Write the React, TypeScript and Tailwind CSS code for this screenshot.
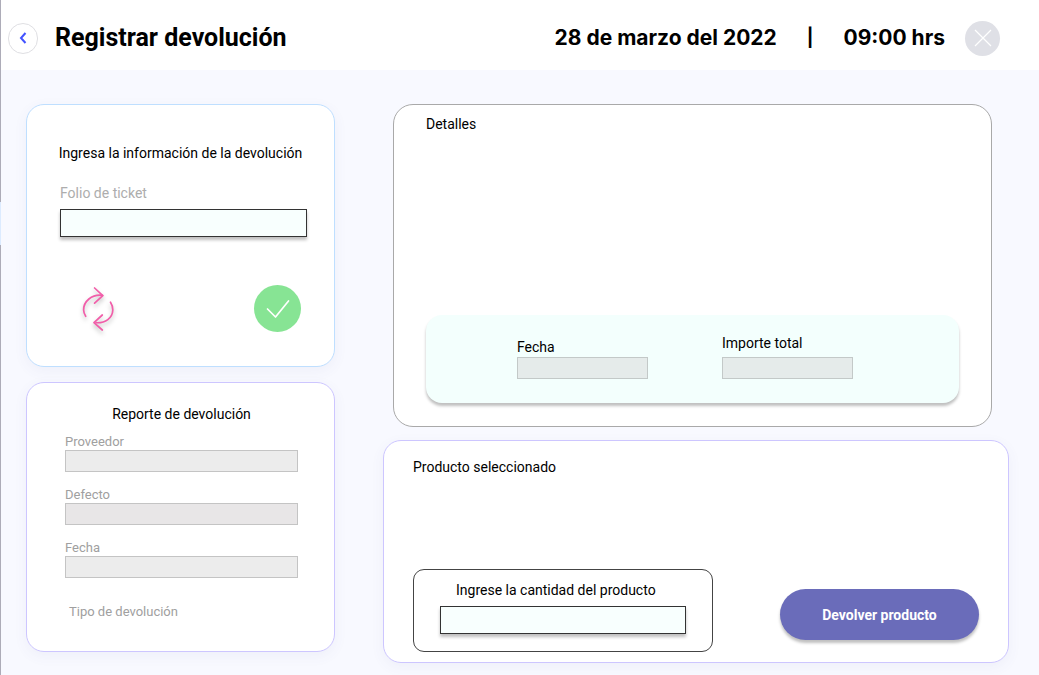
import type { ReactNode } from "react";

function Card({ label, className, children }: { label: string; className: string; children: ReactNode }) {
  return (
    <section aria-label={label} className={`flex flex-col border bg-white ${className}`}>
      {children}
    </section>
  );
}

function ReadOnlyField({ id, label, className }: { id: string; label: string; className: string }) {
  return (
    <div className="flex flex-col">
      <label htmlFor={id} className="text-[13px] leading-4 text-[#a0a0a0]">
        {label}
      </label>
      <input id={id} readOnly className={`h-[22px] w-full border border-[#c4c4c4] px-1 text-sm outline-none ${className}`} />
    </div>
  );
}

function RefreshIcon() {
  return (
    <svg
      width="36"
      height="46"
      viewBox="0 0 36 46"
      fill="none"
      stroke="#f15ea9"
      strokeWidth="1.7"
      strokeLinecap="round"
      strokeLinejoin="round"
      className="drop-shadow-[0_3px_2px_rgba(0,0,0,0.25)]"
      aria-hidden="true"
    >
      <path d="M13.600 2 L21.800 9.700 L13.600 17.200" />
      <path d="M21.500 9.300 C10.500 8 2.500 15.500 2.600 24 C2.700 26.500 3.500 28.500 4.700 30.300" />
      <path d="M29.500 16.200 C31 18.500 31.800 21 31.800 24 C31.500 32 24.500 37.300 15 36.700" />
      <path d="M21.300 29 L13 36.600 L21.300 44" />
    </svg>
  );
}

export default function App() {
  return (
    <div className="flex min-h-screen bg-[#f8f9ff] font-[Roboto,sans-serif] text-sm leading-5 text-black">
      <div className="flex w-px shrink-0 flex-col" aria-hidden="true">
        <div className="h-[202px] bg-[#adacb8]" />
        <div className="h-[43px] bg-[#dcebff]" />
        <div className="flex-1 bg-[#adacb8]" />
      </div>

      <div className="flex min-w-0 flex-1 flex-col">
        <header className="flex h-[70px] items-center bg-white pt-1.5 pr-[39px] pl-[7px]">
          <button
            type="button"
            aria-label="Regresar"
            className="flex h-[31px] w-[30px] items-center justify-center rounded-full border border-[#dfdfe3] bg-white"
          >
            <svg width="8" height="12" viewBox="0 0 8 12" fill="none" stroke="#4353ff" strokeWidth="2" aria-hidden="true">
              <path d="M6.500 1 L2 6 L6.500 11" />
            </svg>
          </button>
          <h1 className="ml-[17px] text-[25px] leading-8 font-bold">Registrar devolución</h1>
          <div className="ml-auto flex items-center font-[Inter,sans-serif] text-[21px] leading-7 font-bold">
            <span>28 de marzo del 2022</span>
            <span className="mx-[30px] text-lg">|</span>
            <span>09:00 hrs</span>
          </div>
          <button
            type="button"
            aria-label="Cerrar"
            className="ml-5 flex size-[35px] items-center justify-center rounded-full bg-[#dfe0e6]"
          >
            <svg width="18" height="18" viewBox="0 0 18 18" fill="none" stroke="#ffffff" strokeWidth="1.200" aria-hidden="true">
              <path d="M1 1 L17 17 M17 1 L1 17" />
            </svg>
          </button>
        </header>

        <main className="grid grid-cols-[309px_1fr] items-start gap-12 pt-[34px] pr-[30px] pb-3 pl-[25px]">
          <div className="flex flex-col gap-[15px]">
            <Card
              label="Información de la devolución"
              className="rounded-[18px] border-[#bfdfff] pt-[38px] pr-[27px] pb-[34px] pl-[33px] shadow-[0_4px_14px_rgba(80,80,160,0.06)]"
            >
              <h2 className="-ml-1.5 text-center">Ingresa la información de la devolución</h2>
              <label htmlFor="folio" className="mt-5 text-[#adadad]">
                Folio de ticket
              </label>
              <input
                id="folio"
                className="mt-1.5 h-7 w-full border border-[#333333] bg-[#f8fffe] px-2 shadow-[0_3px_3px_rgba(0,0,0,0.25)] outline-none"
              />
              <div className="mt-12 flex items-center justify-between pr-1.5 pl-[21px]">
                <button type="button" aria-label="Reiniciar">
                  <RefreshIcon />
                </button>
                <button
                  type="button"
                  aria-label="Confirmar"
                  className="flex size-[47px] items-center justify-center rounded-full bg-[#87e494]"
                >
                  <svg width="24" height="20" viewBox="0 0 24 20" fill="none" stroke="#ffffff" strokeWidth="1.700" strokeLinecap="round" strokeLinejoin="round" aria-hidden="true">
                    <path d="M1.500 10 L9.500 18 L22.500 2" />
                  </svg>
                </button>
              </div>
            </Card>

            <Card
              label="Reporte de devolución"
              className="rounded-[18px] border-[#cdc6ff] pt-[21px] pr-9 pb-[29px] pl-[38px] shadow-[0_4px_14px_rgba(80,80,160,0.06)]"
            >
              <h2 className="text-center">Reporte de devolución</h2>
              <div className="mt-2.5 flex flex-col gap-[15px]">
                <ReadOnlyField id="proveedor" label="Proveedor" className="bg-[#ececec]" />
                <ReadOnlyField id="defecto" label="Defecto" className="bg-[#e8e6e7]" />
                <ReadOnlyField id="fecha-reporte" label="Fecha" className="bg-[#ececec]" />
              </div>
              <p className="mt-6 pl-1 text-[13px] text-[#a0a0a0]">Tipo de devolución</p>
            </Card>
          </div>

          <div className="flex flex-col gap-[13px]">
            <Card label="Detalles" className="mr-[17px] ml-2.5 rounded-[20px] border-[#a9a9a9] px-8 pt-[9px] pb-[23px]">
              <h2>Detalles</h2>
              <div className="mt-[181px] flex h-[88px] items-end gap-[74px] rounded-2xl bg-[#f3fffd] pr-[91px] pb-6 pl-[91px] shadow-[0_3px_3px_rgba(0,0,0,0.25)]">
                <div className="flex w-[131px] flex-col">
                  <label htmlFor="fecha">Fecha</label>
                  <input id="fecha" readOnly className="h-[22px] w-full border border-[#c3c9c8] bg-[#e5ebea] px-1 outline-none" />
                </div>
                <div className="flex w-[131px] flex-col gap-1">
                  <label htmlFor="importe">Importe total</label>
                  <input id="importe" readOnly className="h-[22px] w-full border border-[#c3c9c8] bg-[#e5ebea] px-1 outline-none" />
                </div>
              </div>
            </Card>

            <Card
              label="Producto seleccionado"
              className="rounded-[18px] border-[#cdc6ff] px-[29px] pt-4 pb-2.5 shadow-[0_4px_14px_rgba(80,80,160,0.06)]"
            >
              <h2>Producto seleccionado</h2>
              <div className="mt-[92px] flex items-end justify-between">
                <div className="flex w-[300px] flex-col rounded-[11px] border border-[#444444] px-[26px] pt-2.5 pb-[17px]">
                  <label htmlFor="cantidad" className="pl-4">
                    Ingrese la cantidad del producto
                  </label>
                  <input
                    id="cantidad"
                    className="mt-1.5 h-7 w-full border border-[#333333] bg-[#f8fffe] px-2 shadow-[0_3px_3px_rgba(0,0,0,0.25)] outline-none"
                  />
                </div>
                <button
                  type="button"
                  className="mb-3 h-[51px] w-[199px] rounded-full bg-[#6a6cba] font-bold text-white shadow-[0_3px_3px_rgba(0,0,0,0.25)]"
                >
                  Devolver producto
                </button>
              </div>
            </Card>
          </div>
        </main>
      </div>
    </div>
  );
}
